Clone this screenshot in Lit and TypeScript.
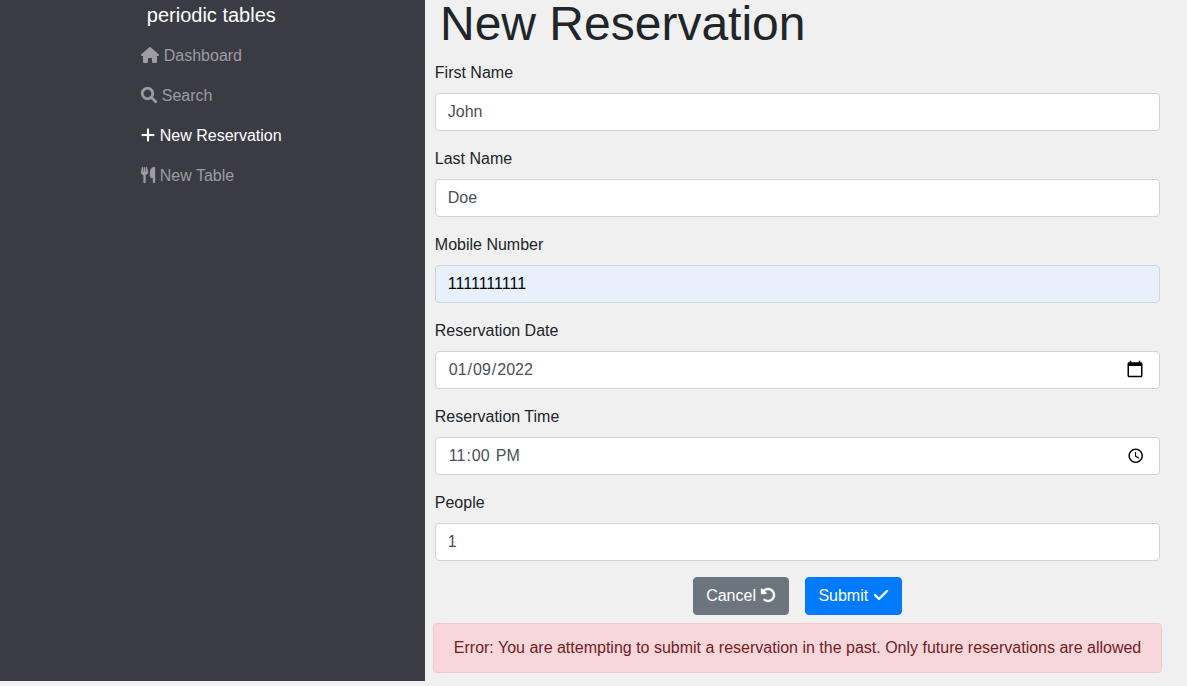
import { LitElement, html, css, nothing } from "lit";
import { customElement } from "lit/decorators.js";

// [view box width, outline weight, path]
const icons: Record<string, [number, number, string]> = {
  house: [576, 0, "M575.8 255.5c0 18-15 32.1-32 32.1h-32l.7 160.2c0 2.7-.2 5.4-.5 8.1V472c0 22.1-17.9 40-40 40H456c-1.1 0-2.2 0-3.3-.1c-1.4 .1-2.8 .1-4.2 .1H416 392c-22.1 0-40-17.9-40-40V448 384c0-17.7-14.3-32-32-32H256c-17.7 0-32 14.3-32 32v64 24c0 22.1-17.9 40-40 40H160 128.1c-1.5 0-3-.1-4.5-.2c-1.2 .1-2.4 .2-3.6 .2H104c-22.1 0-40-17.9-40-40V360c0-.9 0-1.9 .1-2.8V287.6H32c-18 0-32-14-32-32.1c0-9 3-17 10-24L266.4 8c7-7 15-8 22-8s15 2 21 7L564.8 231.5c8 7 12 15 11 24z"],
  search: [512, 8, "M500.3 443.7l-119.7-119.7c27.2-40.4 40.7-90.9 33.7-144.7c-11.8-91.8-87.2-165.6-179.2-177.2c-136.4-17.2-250.4 96.8-233 233c11.6 91.9 85.4 167.4 177.2 179.2c53.8 7 104.3-6.5 144.7-33.7l119.7 119.7c15.6 15.6 40.9 15.6 56.6 0c15.6-15.6 15.6-41 0-56.6zM208 336c-70.6 0-128-57.4-128-128s57.4-128 128-128s128 57.4 128 128s-57.4 128-128 128z"],
  plus: [448, 4, "M432 256c0 17.7-14.3 32-32 32H256v144c0 17.7-14.3 32-32 32s-32-14.3-32-32V288H48c-17.7 0-32-14.3-32-32s14.3-32 32-32h144V80c0-17.7 14.3-32 32-32s32 14.3 32 32v144h144c17.7 0 32 14.3 32 32z"],
  utensils: [448, 10, "M416 0C400 0 288 32 288 176V288c0 35.3 28.7 64 64 64h32V480c0 17.7 14.3 32 32 32s32-14.3 32-32V352 240 32c0-17.7-14.3-32-32-32zM64 16C64 7.8 57.9 1 49.7 .1S34.2 4.6 32.4 12.5L2.1 148.8C.7 155.1 0 161.5 0 167.9c0 45.9 35.1 83.6 80 87.7V480c0 17.7 14.3 32 32 32s32-14.3 32-32V255.6c44.9-4.1 80-41.8 80-87.7c0-6.4-.7-12.8-2.1-19.1L191.6 12.5c-1.8-8-9.3-13.3-17.4-12.4S160 7.8 160 16V150.2c0 5.4-4.4 9.8-9.8 9.8c-5.1 0-9.3-3.9-9.8-9L127.9 14.6C127.2 6.3 120.3 0 112 0s-15.2 6.3-15.9 14.6L83.7 151c-.5 5.1-4.7 9-9.8 9c-5.4 0-9.8-4.4-9.8-9.8V16z"],
  undo: [512, 12, "M480 256c0 123.4-100.5 223.9-223.9 223.9c-48.8 0-95.2-15.5-134.2-44.9c-14.1-10.6-17-30.7-6.4-44.8c10.6-14.1 30.7-17 44.8-6.4c27.9 21 61.1 32.1 95.8 32.1c88.3 0 160.1-71.8 160.1-159.9S344.3 96.2 256 96.2c-37.5 0-73.1 13.5-101.3 36.6l45.1 45.1C214.9 193 204.3 224 182.9 224H48c-8.8 0-16-7.2-16-16V73.1c0-21.4 25.9-32.1 41-17l36 36C149 53.7 201.1 32.1 256 32.1C379.5 32.1 480 132.6 480 256z"],
  check: [512, 8, "M470.6 105.4c12.5 12.5 12.5 32.8 0 45.3l-256 256c-12.5 12.5-32.8 12.5-45.3 0l-128-128c-12.5-12.5-12.5-32.8 0-45.3s32.8-12.5 45.3 0L192 338.7 425.4 105.4c12.5-12.5 32.8-12.5 45.3 0z"],
};

const icon = (name: string) => {
  const [w, weight, d] = icons[name];
  return html`<svg class="icon" width=${w / 32} height="16" viewBox="0 0 ${w} 512"><path fill="currentColor" stroke="currentColor" stroke-width=${weight} d=${d}></path></svg>`;
};

const calendar = html`<svg class="picker calendar" viewBox="0 0 24 24"><path d="M20 3h-1V1h-2v2H7V1H5v2H4c-1.1 0-2 .9-2 2v16c0 1.1.9 2 2 2h16c1.1 0 2-.9 2-2V5c0-1.1-.9-2-2-2zm0 18H4V8h16v13z"></path></svg>`;
const clock = html`<svg class="picker clock" viewBox="0 0 24 24"><path d="M12 2C6.5 2 2 6.5 2 12s4.5 10 10 10 10-4.5 10-10S17.5 2 12 2zm0 18c-4.4 0-8-3.6-8-8s3.6-8 8-8 8 3.6 8 8-3.6 8-8 8zM12.5 7H11v6l5.2 3.2.8-1.3-4.5-2.7V7z"></path></svg>`;

@customElement("app-root")
export class AppRoot extends LitElement {
  static styles = css`
    :host { display: flex; align-items: flex-start; height: 686px; background: #f0f0f0; color: #212529; font: 16px/24px "Liberation Sans", Arial, sans-serif; }
    * { box-sizing: border-box; }
    .icon { display: inline-block; height: 16px; vertical-align: -2px; overflow: visible; }
    .side { width: 424.8px; height: 681px; flex: none; background: #3b3b44; padding: 0 0 0 141.3px; }
    .brand { font-size: 20px; line-height: 30px; color: #fff; padding-left: 5.5px; margin-bottom: 6px; }
    .link { display: block; padding: 8px 0; color: #9c9ca1; text-decoration: none; }
    .active { color: #fff; }
    .main { flex: 1; padding: 0 25.2px 0 8px; }
    h1 { margin: 0 0 13px 7.2px; font-size: 48px; line-height: 47.6px; font-weight: 400; }
    form { padding: 0 2px; }
    .group { margin-bottom: 16px; }
    .control { position: relative; }
    label { display: block; margin-bottom: 8px; height: 24px; }
    input { display: block; width: 100%; height: 38px; padding: 6px 12px; font: inherit; color: #495057; background: #fff; border: 1px solid #ced4da; border-radius: 4px; margin: 0; outline: 0; }
    input::-webkit-calendar-picker-indicator { opacity: 0; }
    input::-webkit-datetime-edit-ampm-field { margin-left: 1px; }
    .picker { position: absolute; pointer-events: none; fill: #000; }
    .calendar { width: 18px; height: 18px; top: 9px; right: 16.6px; }
    .clock { width: 17.4px; height: 17.4px; top: 10.1px; right: 15.7px; }
    .filled { background: #e8f0fe; color: #000; }
    .buttons { display: flex; justify-content: center; gap: 16px; padding-right: 0.3px; }
    button { height: 38px; padding: 6px 12px; border: 1px solid; border-radius: 4px; font: inherit; color: #fff; white-space: nowrap; }
    .cancel { background: #6c757d; border-color: #6c757d; }
    .submit { background: #007bff; border-color: #007bff; }
    .alert { margin-top: 8px; height: 50px; padding: 12px 20px; text-align: center; white-space: nowrap; border: 1px solid #f5c6cb; border-radius: 4px; background: #f8d7da; color: #721c24; }
  `;

  private field(label: string, type: string, value: string, cls = "", picker: unknown = nothing) {
    return html`<div class="group"><label>${label}</label><div class="control"><input class=${cls} type=${type} .value=${value} aria-label=${label}>${picker}</div></div>`;
  }

  render() {
    return html`
      <nav class="side">
        <div class="brand">periodic tables</div>
        <a class="link">${icon("house")} Dashboard</a>
        <a class="link">${icon("search")} Search</a>
        <a class="link active">${icon("plus")} New Reservation</a>
        <a class="link">${icon("utensils")} New Table</a>
      </nav>
      <main class="main">
        <h1>New Reservation</h1>
        <form>
          ${this.field("First Name", "text", "John")}
          ${this.field("Last Name", "text", "Doe")}
          ${this.field("Mobile Number", "tel", "1111111111", "filled")}
          ${this.field("Reservation Date", "date", "2022-01-09", "", calendar)}
          ${this.field("Reservation Time", "time", "23:00", "", clock)}
          ${this.field("People", "number", "1")}
          <div class="buttons">
            <button type="button" class="cancel">Cancel ${icon("undo")}</button>
            <button type="button" class="submit">Submit ${icon("check")}</button>
          </div>
        </form>
        <div class="alert">Error: You are attempting to submit a reservation in the past. Only future reservations are allowed</div>
      </main>`;
  }
}
